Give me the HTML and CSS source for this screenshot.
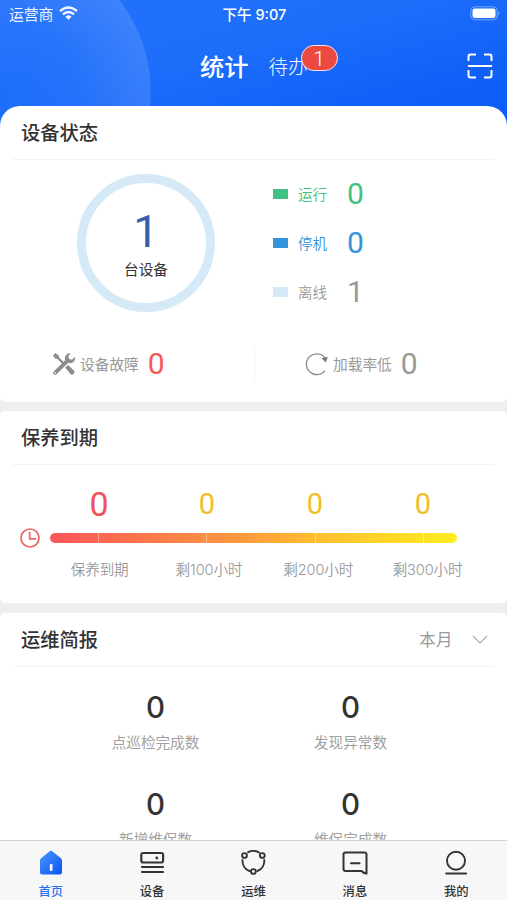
FILE: index.html
```html
<!DOCTYPE html>
<html lang="zh-CN">
<head>
<meta charset="utf-8">
<meta name="viewport" content="width=device-width, initial-scale=1">
<title>统计</title>
<link rel="stylesheet" href="styles.css">
</head>
<body>
<div class="app">
  <header class="header">
    <div class="status">
      <div class="carrier"><span>运营商</span>
        <svg width="19" height="14" viewBox="0 0 19 14" fill="none" stroke="#fff" stroke-width="2.4"><path d="M1 5.1Q9.500-2.300 18 5.100M3.900 8.300Q9.500 3.500 15.100 8.300"/><path d="M6.400 10.700Q9.500 8 12.600 10.700L9.500 13.800Z" fill="#fff" stroke="none"/></svg>
      </div>
      <div class="clock">下午 9:07</div>
      <svg class="battery" width="31" height="15" viewBox="0 0 31 15"><rect x=".8" y=".8" width="26.400" height="13" rx="4" fill="none" stroke="#fff" stroke-opacity=".4"/><rect x="2.500" y="2.500" width="23" height="9.600" rx="2.300" fill="#fff"/><path d="M28.500 5.200q2 2.200 0 4.400z" fill="#fff" opacity=".5"/></svg>
    </div>
    <nav class="top">
      <span class="top-active">统计</span>
      <span class="top-item">待办<b class="badge">1</b></span>
      <svg class="scan" width="26" height="26" viewBox="0 0 26 26" fill="none" stroke="#fff" stroke-width="2"><path d="M1.500 8V3.500q0-2 2-2H9M17 1.500h5.500q2 0 2 2V8M1.500 17v5.500q0 2 2 2H9M17 24.500h5.500q2 0 2-2V17M1 13h24"/></svg>
    </nav>
  </header>

  <main class="content">
    <section class="card card-status">
      <h2 class="card-title">设备状态</h2>
      <div class="overview">
        <div class="ring"><span class="ring-num">1</span><span class="ring-label">台设备</span></div>
        <ul class="legend">
          <li class="run"><i></i><span>运行</span><b>0</b></li>
          <li class="stop"><i></i><span>停机</span><b>0</b></li>
          <li class="offline"><i></i><span>离线</span><b>1</b></li>
        </ul>
      </div>
      <div class="alerts">
        <div class="alert fault">
          <svg width="24" height="24" viewBox="0 0 24 24"><path d="M1 3.500L3.500 1 6.800 3.400 7 5.400 12.300 10.600 10.800 12.200 5.400 6.900 3.300 6.700Z" fill="#8c8c8c"/><path d="M13.200 15.600L16 13 22.200 18.800Q23.200 20.500 21.500 22 20 23.400 18.500 22.300Z" fill="#8c8c8c"/><path d="M18.800 1.200L16.200 4.300 17.200 7 20 7.800 22.800 4.800Q23.800 8 21.200 10.200 19 11.700 16.300 10.800L4.600 22.300Q3 23.600 1.600 22.300.3 20.900 1.700 19.400L13.200 8.200Q12.200 5.500 13.800 3.200 15.800.8 18.800 1.200Z" fill="#8c8c8c"/><circle cx="3.100" cy="20.900" r=".8" fill="#fff"/></svg>
          <span>设备故障</span><b>0</b>
        </div>
        <div class="alert load">
          <svg width="24" height="24" viewBox="0 0 24 24" fill="none" stroke="#8c8c8c" stroke-width="1.300"><path d="M20.300 6.200A10.400 10.400 0 1 0 20 18.600"/><path d="M16.500 6.100L23 5 20.600 10.500Z" fill="#777" stroke="none"/></svg>
          <span>加载率低</span><b>0</b>
        </div>
      </div>
    </section>

    <section class="card card-care">
      <h2 class="card-title">保养到期</h2>
      <div class="care-nums"><b class="due">0</b><b>0</b><b>0</b><b>0</b></div>
      <div class="care-line">
        <svg width="20" height="20" viewBox="0 0 20 20" fill="none" stroke="#ee6262" stroke-width="1.700"><circle cx="10" cy="10" r="9"/><path d="M9.700 4v6.800H16"/></svg>
        <div class="bar"><i></i><i></i><i></i><i></i></div>
      </div>
      <div class="care-labels"><span>保养到期</span><span>剩100小时</span><span>剩200小时</span><span>剩300小时</span></div>
    </section>

    <section class="card card-report">
      <h2 class="card-title"><span>运维简报</span><span class="period">本月<svg width="16" height="9" viewBox="0 0 16 9" fill="none" stroke="#aaa" stroke-width="1.200"><path d="M1 1l7 7 7-7"/></svg></span></h2>
      <div class="report">
        <div><b>0</b><span>点巡检完成数</span></div>
        <div><b>0</b><span>发现异常数</span></div>
        <div><b>0</b><span>新增维保数</span></div>
        <div><b>0</b><span>维保完成数</span></div>
      </div>
    </section>
  </main>

  <nav class="tabs">
    <a class="tab active"><svg width="26" height="26" viewBox="0 0 26 26"><defs><linearGradient id="home" x1="0" y1="0" x2="1" y2="1"><stop stop-color="#4b96ff"/><stop offset="1" stop-color="#0955f4"/></linearGradient></defs><path d="M2 10.200Q2 9 3 8.200L11.400 1.400Q13 .2 14.600 1.400L23 8.200Q24 9 24 10.200V22.500Q24 24.500 22 24.500H4Q2 24.500 2 22.500Z" fill="url(#home)"/><path d="M11.800 14.200h2.700v6.600h-2.700z" fill="#fff"/></svg><span>首页</span></a>
    <a class="tab"><svg width="26" height="26" viewBox="0 0 26 26" fill="none" stroke="#333" stroke-width="2.200"><rect x="2.300" y="3" width="21.800" height="9.500" rx="2"/><path d="M3 17h21M3 22h21" stroke-linecap="round"/><circle cx="17.800" cy="8" r="1.400" fill="#333" stroke="none"/></svg><span>设备</span></a>
    <a class="tab"><svg width="26" height="26" viewBox="0 0 26 26" fill="none" stroke="#333" stroke-width="1.900"><circle cx="4.500" cy="5.500" r="2.400"/><circle cx="22.300" cy="5.500" r="2.400"/><circle cx="13.400" cy="21.500" r="2.400"/><path d="M8.200 2.200A11 11 0 0 1 19 2.500M2.500 10A11 11 0 0 0 9.400 21M24.300 10A11 11 0 0 1 17.400 21" stroke-linecap="round"/></svg><span>运维</span></a>
    <a class="tab"><svg width="26" height="26" viewBox="0 0 26 26" fill="none" stroke="#333" stroke-width="2"><path d="M3.500 2.500h19q2 0 2 2v19q-3-.2-5-2.500h-16q-2 0-2-2V4.500q0-2 2-2Z"/><path d="M9 13.300h8.500" stroke-linecap="round"/></svg><span>消息</span></a>
    <a class="tab"><svg width="26" height="26" viewBox="0 0 26 26" fill="none" stroke="#333" stroke-width="1.900"><circle cx="13" cy="10.800" r="9"/><path d="M3.200 23.500h20" stroke-linecap="round"/></svg><span>我的</span></a>
  </nav>
</div>
</body>
</html>
```

FILE: styles.css
```css
* { box-sizing: border-box; }
body {
  margin: 0;
  background: #eeeef1;
  font-family: "Noto Sans CJK SC", sans-serif;
  color: #333;
}
b { font-weight: 400; font-family: Roboto, sans-serif; }
i { font-style: normal; }
h2, ul { margin: 0; padding: 0; }
svg { flex: none; display: block; }
.app { height: 900px; display: flex; flex-direction: column; overflow: hidden; }

.header {
  height: 126px;
  flex: none;
  color: #fff;
  background:
    radial-gradient(circle 151px at 0px 92px, rgba(255,255,255,0) 0, rgba(255,255,255,.03) 50%, rgba(255,255,255,.13) 99.500%, transparent 100%),
    linear-gradient(165deg, #2472fb 0%, #1c6dfa 45%, #0d5df8 85%);
}
.status {
  height: 26px;
  display: grid;
  grid-template-columns: 1fr auto 1fr;
  align-items: center;
  padding: 0 6px 0 9px;
  font-size: 14.800px;
}
.carrier { display: flex; align-items: center; gap: 6px; opacity: .93; }
.clock { font-family: Inter, "Noto Sans CJK SC", sans-serif; font-size: 14.500px; font-weight: 500; margin-right: 1px; }
.battery { justify-self: end; }
.top { height: 78px; display: flex; align-items: center; padding: 0 14px 0 200px; }
.top-active { font-size: 24.300px; font-weight: 500; }
.top-item { position: relative; margin-left: 20px; font-size: 19.500px; font-weight: 300; }
.badge {
  position: absolute;
  left: 32px;
  top: -6px;
  width: 37px;
  height: 26px;
  border: 1.500px solid #fbdde3;
  border-radius: 13px;
  background: #eb4a40;
  font: 300 21px/27px Roboto, sans-serif;
  text-align: center;
}
.scan { margin: 2px 0 0 auto; }

.content { flex: 1; min-height: 0; margin-top: -20px; display: flex; flex-direction: column; gap: 9px; overflow: hidden; }
.card { flex: none; background: #fff; border-radius: 5px; padding: 0 12px; }
.card-title {
  height: 54px;
  display: flex;
  align-items: center;
  padding: 0 0 1px 9px;
  border-bottom: 1px solid #f4f4f4;
  font-size: 19.300px;
  font-weight: 500;
}
.card-status { height: 296px; border-radius: 20px 20px 5px 5px; }
.overview { display: flex; height: 176px; padding: 14px 0 0 65px; }
.ring {
  width: 138px;
  height: 138px;
  border: 9px solid #d5e9f7;
  border-radius: 50%;
  display: flex;
  flex-direction: column;
  align-items: center;
}
.ring-num { font: 400 45px/48px Roboto, sans-serif; margin-top: 25px; color: #355fab; }
.ring-label { font-size: 14.700px; line-height: 22px; margin-top: 2px; }
.legend { list-style: none; margin: -5px 0 0 58px; }
.legend li { height: 49px; display: flex; align-items: center; color: var(--c); }
.legend i { width: 15px; height: 10px; background: var(--box, var(--c)); }
.legend span { width: 49px; margin: -1px 0 0 10px; font-size: 14.500px; font-weight: 350; }
.legend b, .alert b { font-size: 30px; line-height: 36px; }
.run { --c: #42c282; }
.stop { --c: #3593dc; }
.offline { --c: #999; --box: #d5e9f7; }
.alerts { display: grid; grid-template-columns: 242px 1fr; height: 36px; margin-top: 10px; }
.alert { display: flex; align-items: center; font-size: 14.700px; color: #999; padding-left: 40px; }
.alert span { margin: -2px 0 0 4px; }
.alert b { margin-left: 9px; }
.fault b { color: #f45a57; }
.load { border-left: 1px solid #f4f4f4; padding-left: 50px; }

.card-care { height: 192px; }
.care-nums { display: grid; grid-template-columns: repeat(4, 108px); height: 42px; margin: 18px 0 0 33px; align-items: center; text-align: center; color: #f0bf29; font-size: 29px; }
.care-nums .due { color: #f05459; font-size: 34px; }
.care-line { display: flex; align-items: center; gap: 10px; height: 20px; margin: 3px 0 0 8px; }
.bar { width: 407px; height: 10px; padding-left: 48px; border-radius: 5px; background: linear-gradient(90deg, #fd5558, #ff9a3e 47%, #ffc32d 68%, #ffec20); display: flex; }
.bar i { width: 108.300px; border-left: 1px solid rgba(255,255,255,.4); }
.bar i:last-child { width: 1px; }
.care-labels { display: grid; grid-template-columns: repeat(4, 109.300px); margin: 11px 0 0 33px; text-align: center; font: 14.600px/22px Inter, "Noto Sans CJK SC", sans-serif; font-weight: 350; color: #999; letter-spacing: -.15px; }

.card-report { height: 300px; margin-top: 1px; }
.card-report .card-title { justify-content: space-between; padding-right: 7px; }
.period { display: flex; align-items: center; gap: 19px; font-size: 16.500px; font-weight: 400; color: #999; letter-spacing: .4px; }
.report { display: grid; grid-template-columns: 195px 195px; grid-auto-rows: 96.500px; margin: 22px 0 0 46px; }
.report div { display: flex; flex-direction: column; align-items: center; }
.report b { font-family: Inter, sans-serif; font-size: 29.500px; line-height: 37px; font-weight: 500; }
.report span { margin-top: 5px; font-size: 14.600px; line-height: 22px; color: #a0a0a0; }

.tabs { height: 60px; flex: none; display: grid; grid-template-columns: repeat(5, 1fr); background: #f7f7f8; border-top: 1px solid #d4d4d4; }
.tab { display: flex; flex-direction: column; align-items: center; padding-top: 9px; font-size: 12.300px; line-height: 16px; font-weight: 500; }
.tab span { margin-top: 7px; }
.tab.active { color: #2d72f5; }
```
